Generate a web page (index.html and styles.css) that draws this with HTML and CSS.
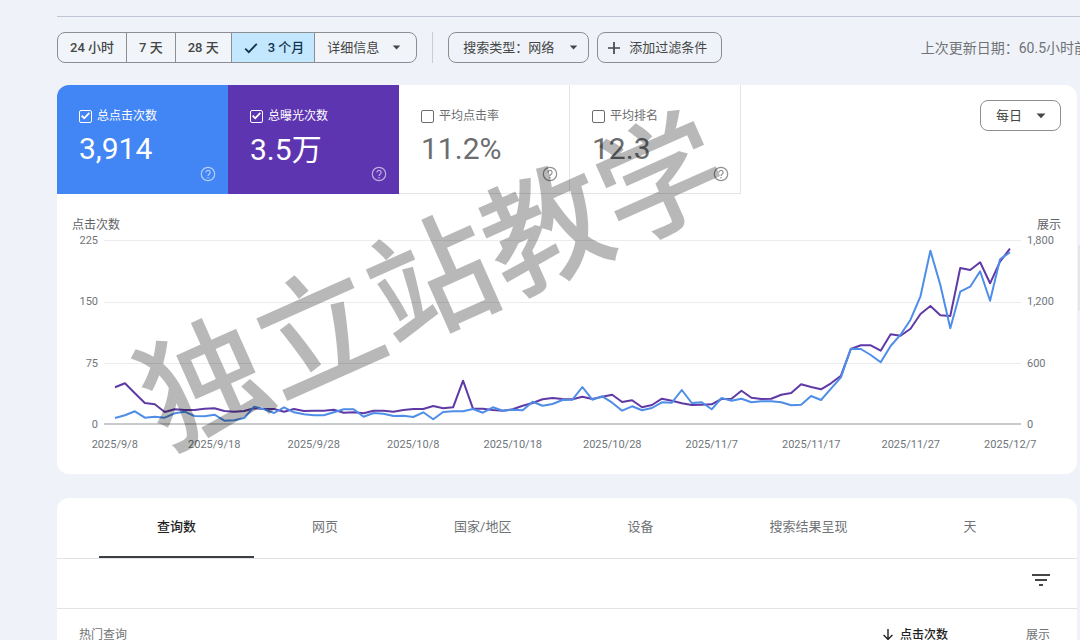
FILE: index.html
```html
<!DOCTYPE html>
<html lang="zh-CN">
<head>
<meta charset="utf-8">
<title>效果</title>
<meta name="viewport" content="width=device-width, initial-scale=1">
<link rel="stylesheet" href="styles.css">
</head>
<body>
<svg class="defs" aria-hidden="true">
  <symbol id="help" viewBox="0 0 16 16">
    <circle cx="8" cy="8" r="6.7" fill="none" stroke="currentColor" stroke-width="1.2"/>
    <path d="M5.9 6.4a2.1 2.1 0 1 1 3.4 1.7C8.5 8.7 8 9 8 9.9" fill="none" stroke="currentColor" stroke-width="1.2"/>
    <circle cx="8" cy="11.7" r=".8" fill="currentColor"/>
  </symbol>
  <symbol id="caret" viewBox="0 0 10 6"><path d="M.5.5h9L5 5.3z" fill="currentColor"/></symbol>
</svg>
<main class="page">
  <div class="toolbar">
    <div class="segments" role="group" aria-label="日期范围">
      <button class="segment" type="button">24 小时</button>
      <button class="segment" type="button">7 天</button>
      <button class="segment" type="button">28 天</button>
      <button class="segment segment-on" type="button" aria-pressed="true">
        <svg class="tick" viewBox="0 0 14 12" aria-hidden="true"><path d="M1.2 6.6l3.6 3.6L12.8 1.8" fill="none" stroke="currentColor" stroke-width="1.8"/></svg>3 个月
      </button>
      <span class="picker picker-segment">
        <select class="select" aria-label="更多日期"><option>详细信息</option></select>
        <svg class="caret" aria-hidden="true"><use href="#caret"/></svg>
      </span>
    </div>
    <span class="divider"></span>
    <span class="picker picker-type">
      <select class="select" aria-label="搜索类型"><option>搜索类型：网络</option></select>
      <svg class="caret" aria-hidden="true"><use href="#caret"/></svg>
    </span>
    <button class="add" type="button">
      <svg class="plus" viewBox="0 0 12 12" aria-hidden="true"><path d="M6 0v12M0 6h12" stroke="currentColor" stroke-width="1.7"/></svg>添加过滤条件
    </button>
    <span class="updated">上次更新日期：60.5小时前</span>
  </div>

  <section class="card performance">
    <div class="summary">
      <div class="metrics">
        <div class="metric metric-clicks">
          <label class="metric-label"><input class="check" type="checkbox" checked>总点击次数</label>
          <span class="metric-value">3,914</span>
          <svg class="help" aria-hidden="true"><use href="#help"/></svg>
        </div>
        <div class="metric metric-views">
          <label class="metric-label"><input class="check" type="checkbox" checked>总曝光次数</label>
          <span class="metric-value">3.5万</span>
          <svg class="help" aria-hidden="true"><use href="#help"/></svg>
        </div>
        <div class="metric">
          <label class="metric-label"><input class="check" type="checkbox">平均点击率</label>
          <span class="metric-value">11.2%</span>
          <svg class="help" aria-hidden="true"><use href="#help"/></svg>
        </div>
        <div class="metric">
          <label class="metric-label"><input class="check" type="checkbox">平均排名</label>
          <span class="metric-value">12.3</span>
          <svg class="help" aria-hidden="true"><use href="#help"/></svg>
        </div>
      </div>
      <span class="picker picker-day">
        <select class="select" aria-label="时间粒度"><option>每日</option></select>
        <svg class="caret" aria-hidden="true"><use href="#caret"/></svg>
      </span>
    </div>

    <div class="chart">
      <div class="axis-titles"><span>点击次数</span><span>展示</span></div>
      <div class="chart-body">
        <div class="axis axis-left"><span>225</span><span>150</span><span>75</span><span>0</span></div>
        <svg class="plot" viewBox="0 0 917 185" preserveAspectRatio="none" role="img" aria-label="点击次数和展示趋势">
          <path class="grid-line" d="M0 .5H917M0 62.5H917M0 123.5H917"/>
          <path class="base-line" d="M0 184H917"/>
          <g transform="translate(11 0) scale(.9944 1)">
            <polyline class="series series-views" points="0,147.3 10,143.3 20,153.3 30,163 40,164.3 50,172 60,169.3 70,170 80,170 90,168.7 100,168.3 110,171 120,171.7 130,171 140,168.3 150,169 160,169 170,171.7 180,169 190,171 200,170.7 210,170.7 220,169.7 230,172.7 240,172.3 250,173.3 260,170.7 270,170.7 280,171.7 290,170 300,169 310,169 320,166 330,168.3 340,167.3 350,140.7 360,168.7 370,168.7 380,170 390,170.7 400,169.3 410,165.7 420,163 430,159.3 440,158 450,159 460,159.3 470,156.7 480,159 490,156.7 500,154.7 510,162 520,160.3 530,167.3 540,165 550,158.7 560,160.7 570,163.3 580,165 590,164.7 600,164.3 610,159 620,158.7 630,150.7 640,157.7 650,159 660,158.7 670,154.7 680,153 690,144.3 700,147 710,149.3 720,143.3 730,135.7 740,109 750,105.3 760,105.3 770,110.7 780,94.3 790,95.7 800,88.7 810,74 820,66 830,75.3 840,76 850,28 860,30 870,22.3 880,43.3 890,21.7 900,8.7"/>
            <polyline class="series series-clicks" points="0,178 10,175.3 20,171.3 30,177.7 40,176.7 50,177.7 60,173.3 70,171.7 80,176 90,176.3 100,174.7 110,180.7 120,180.3 130,178 140,166.7 150,169.3 160,173 170,167.3 180,172.3 190,174.3 200,175.3 210,175.3 220,172.3 230,169.3 240,169.3 250,176.7 260,173 270,173.7 280,176 290,175.7 300,177 310,172.3 320,179.3 330,172 340,171.3 350,171.3 360,169 370,172.7 380,167.3 390,170.7 400,169.7 410,170.3 420,161.7 430,165.7 440,164 450,160 460,159.7 470,147 480,159.7 490,156.3 500,162.7 510,170.7 520,166.3 530,170.3 540,168 550,162.3 560,162.7 570,150 580,163 590,162.3 600,169.3 610,158 620,160.7 630,158.8 640,162.3 650,161.3 660,161.3 670,162.3 680,165.3 690,164.7 700,156 710,160 720,148.7 730,137.3 740,108.7 750,109 760,115 770,122.3 780,106 790,94.7 800,79.7 810,56.3 820,10.7 830,45 840,88.3 850,51.7 860,46.7 870,31.3 880,60.7 890,19.3 900,12.3"/>
          </g>
        </svg>
        <div class="axis axis-right"><span>1,800</span><span>1,200</span><span>600</span><span>0</span></div>
      </div>
      <div class="dates"><span>2025/9/8</span><span>2025/9/18</span><span>2025/9/28</span><span>2025/10/8</span><span>2025/10/18</span><span>2025/10/28</span><span>2025/11/7</span><span>2025/11/17</span><span>2025/11/27</span><span>2025/12/7</span></div>
    </div>
    <div class="watermark">独立站教学</div>
  </section>

  <section class="card details">
    <div class="tabs" role="tablist">
      <button class="tab tab-on" type="button" role="tab" aria-selected="true">查询数</button>
      <button class="tab" type="button" role="tab">网页</button>
      <button class="tab" type="button" role="tab">国家/地区</button>
      <button class="tab" type="button" role="tab">设备</button>
      <button class="tab" type="button" role="tab">搜索结果呈现</button>
      <button class="tab" type="button" role="tab">天</button>
    </div>
    <div class="filter-row">
      <button class="filter" type="button" aria-label="过滤">
        <svg class="filter-icon" viewBox="0 0 18 12" aria-hidden="true"><path d="M0 1h18M3 6h12M7 11h4" stroke="currentColor" stroke-width="1.8"/></svg>
      </button>
    </div>
    <table class="queries">
      <thead>
        <tr>
          <th class="query-col" scope="col">热门查询</th>
          <th class="sorted" scope="col"><svg class="arrow" viewBox="0 0 10 12" aria-hidden="true"><path d="M5 0v10.4M.6 6L5 10.4 9.4 6" fill="none" stroke="currentColor" stroke-width="1.4"/></svg>点击次数</th>
          <th class="views-col" scope="col">展示</th>
        </tr>
      </thead>
    </table>
  </section>
  <div class="side-handle"></div>
</main>
</body>
</html>
```
FILE: styles.css
```css
* { box-sizing: border-box; }
body {
  margin: 0;
  background: #eff2f8;
  color: #444746;
  font: 13px/20px Roboto, "Noto Sans CJK SC", sans-serif;
}
button, select, input { font: inherit; color: inherit; margin: 0; }
button { cursor: pointer; }
.defs { position: absolute; width: 0; height: 0; }
.page {
  position: relative;
  height: 100vh;
  overflow: hidden;
  padding: 16px 3px 0 57px;
}

/* toolbar */
.toolbar {
  display: flex;
  align-items: center;
  height: 69px;
  margin-right: -11px;
  padding-bottom: 7px;
  border-top: 1px solid #c1c6d6;
  white-space: nowrap;
}
.segments {
  display: flex;
  height: 31px;
  border: 1px solid #8b8f94;
  border-radius: 8px;
  overflow: hidden;
  background: #f1f4f9;
}
.segment {
  display: flex;
  align-items: center;
  gap: 10px;
  padding: 0 12px;
  border: 0;
  border-right: 1px solid #8b8f94;
  background: none;
  font-weight: 500;
}
.segment-on { background: #c2e7ff; color: #12344d; padding: 0 10px 0 12px; }
.tick { width: 14px; height: 12px; }
.picker {
  position: relative;
  display: inline-flex;
  align-items: center;
  height: 31px;
  border: 1px solid #8b8f94;
  border-radius: 8px;
}
.picker-segment { height: auto; border: 0; }
.select {
  appearance: none;
  height: 100%;
  padding: 0 36px 0 12px;
  border: 0;
  background: none;
}
.picker .caret {
  position: absolute;
  right: 15px;
  width: 9px;
  height: 5px;
  pointer-events: none;
}
.divider { width: 1px; height: 31px; margin: 0 15px; background: #c8ccd4; }
.picker-type .select { padding: 0 33px 0 14px; }
.picker-type .caret { right: 10px; }
.add {
  display: flex;
  align-items: center;
  gap: 9px;
  height: 31px;
  margin-left: 8px;
  padding: 0 14px 0 10px;
  border: 1px solid #8b8f94;
  border-radius: 8px;
  background: none;
}
.plus { width: 12px; height: 12px; }
.updated { margin-left: auto; color: #6f7376; font-size: 14px; }

/* cards */
.card { background: #fff; border-radius: 12px; }
.performance { position: relative; height: 389px; }
.summary { display: flex; justify-content: space-between; padding-right: 16px; }
.metrics {
  display: flex;
  border-radius: 12px 0 0 0;
  overflow: hidden;
}
.metric {
  position: relative;
  display: flex;
  flex-direction: column;
  width: 171px;
  height: 109px;
  padding: 21px 22px 0;
  border-right: 1px solid #e3e5e8;
  border-bottom: 1px solid #e3e5e8;
  color: #6b6d6f;
}
.metric-clicks { background: #4285f4; border-color: #4285f4; color: #fff; }
.metric-views { background: #5e35b1; border-color: #5e35b1; color: #fff; }
.metric-label { display: flex; align-items: center; gap: 5px; font-size: 12px; }
.check {
  appearance: none;
  display: grid;
  place-items: center;
  width: 13px;
  height: 13px;
  border: 1px solid currentColor;
  border-radius: 2px;
}
.check:checked::before {
  content: "";
  width: 9px;
  height: 8px;
  background: currentColor;
  clip-path: polygon(0 52%, 14% 38%, 36% 62%, 86% 4%, 100% 18%, 36% 94%);
}
.metric-value { margin-top: 5px; font-size: 30px; line-height: normal; }
.metric-views .metric-value { line-height: 38px; }
.help {
  position: absolute;
  right: 11px;
  bottom: 11px;
  width: 16px;
  height: 16px;
  opacity: .75;
}
.metric-clicks .help, .metric-views .help { opacity: .6; }
.picker-day { height: 31px; margin-top: 15px; }
.picker-day .select { padding: 0 37px 0 15px; }
.picker-day .caret { right: 14px; width: 10px; height: 6px; }

/* chart */
.chart { padding: 21px 16px 0 8px; color: #70757a; font-size: 11px; }
.axis-titles {
  display: flex;
  justify-content: space-between;
  padding-left: 7px;
  color: #5f6368;
  font-size: 12px;
}
.chart-body { display: flex; gap: 6px; margin-top: 5px; }
.axis {
  display: flex;
  flex-direction: column;
  justify-content: space-between;
  margin: -9px 0 -10px;
}
.axis-left { width: 33px; text-align: right; }
.axis-right { width: 34px; }
.plot { display: block; flex: 1; min-width: 0; height: 185px; }
.grid-line { stroke: #ececee; fill: none; }
.base-line { stroke: #c9cacc; stroke-width: 2; }
.series { fill: none; stroke-width: 2; stroke-linejoin: round; vector-effect: non-scaling-stroke; }
.series-clicks { stroke: #4e8de8; }
.series-views { stroke: #5f3aa6; }
.dates {
  display: grid;
  grid-template-columns: repeat(10, 1fr);
  margin: 10px 1px 0 0;
  text-align: center;
}
.watermark {
  position: absolute;
  left: 59px;
  top: 98px;
  color: rgba(0, 0, 0, .28);
  font: 500 125px/180px "Noto Sans CJK SC", sans-serif;
  white-space: nowrap;
  transform: rotate(-24deg);
  pointer-events: none;
}

/* details */
.details { margin-top: 24px; }
.tabs { display: flex; padding-left: 42px; border-bottom: 1px solid #e1e3e6; }
.tab {
  height: 60px;
  padding: 0 58px;
  border: 0;
  border-bottom: 2px solid transparent;
  background: none;
  color: #6f7376;
}
.tab-on { border-color: #3c4043; color: #1f1f1f; font-weight: 500; }
.filter-row {
  display: flex;
  justify-content: flex-end;
  align-items: center;
  height: 50px;
  padding: 0 27px 8px;
  border-bottom: 1px solid #e1e3e6;
}
.filter { display: flex; padding: 0; border: 0; background: none; }
.filter-icon { width: 18px; height: 12px; }
.queries { width: 100%; border-collapse: collapse; font-size: 12px; }
.queries th { padding: 16px 0; color: #6f7376; font-weight: 400; text-align: right; }
.queries .query-col { padding-left: 22px; text-align: left; }
.queries .sorted { color: #1f1f1f; font-weight: 500; }
.queries .views-col { width: 129px; padding-right: 27px; }
.arrow { width: 10px; height: 12px; margin-right: 7px; vertical-align: -2px; }
.side-handle {
  position: absolute;
  right: 0;
  top: 245px;
  width: 2px;
  height: 66px;
  background: #e3e6ea;
}
```
